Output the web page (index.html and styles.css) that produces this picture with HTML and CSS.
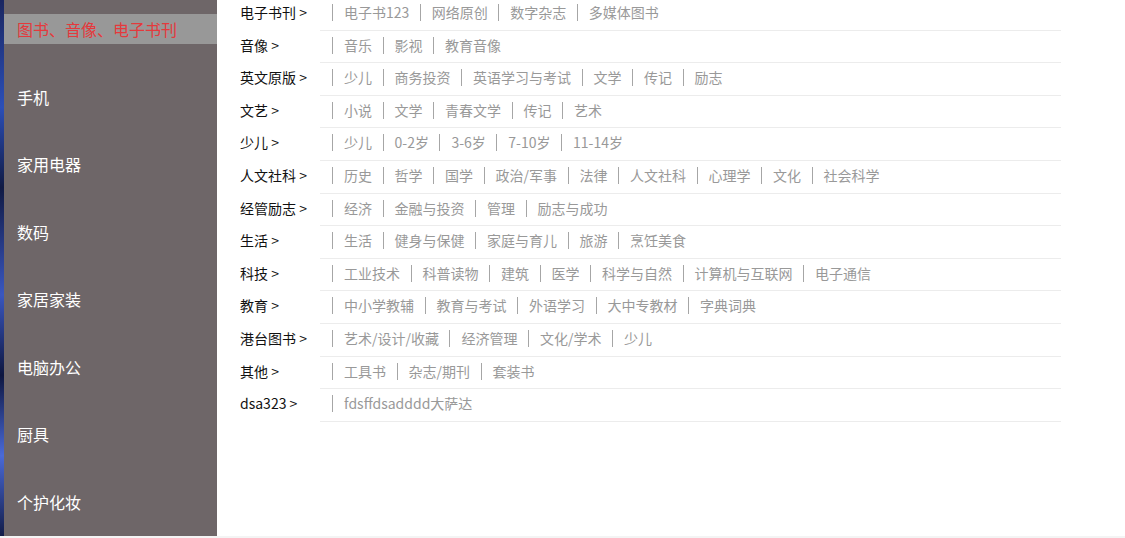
FILE: index.html
```html
<!doctype html>
<html lang="zh-CN">
<head>
    <meta charset="UTF-8">
    <title>商品分类</title>
    <link rel="stylesheet" href="styles.css">
</head>
    <body>
        <div class="page">
            <div class="bgStrip"></div>
            <ul class="catNav">
                <li class="catItem active"><a href="#">图书、音像、电子书刊</a></li>
                <li class="catItem"><a href="#">手机</a></li>
                <li class="catItem"><a href="#">家用电器</a></li>
                <li class="catItem"><a href="#">数码</a></li>
                <li class="catItem"><a href="#">家居家装</a></li>
                <li class="catItem"><a href="#">电脑办公</a></li>
                <li class="catItem"><a href="#">厨具</a></li>
                <li class="catItem"><a href="#">个护化妆</a></li>
            </ul>
            <div class="catPanel">
                <dl class="subList">
                    <dt>电子书刊 &gt;</dt>
                    <dd><a href="#">电子书123</a><a href="#">网络原创</a><a href="#">数字杂志</a><a href="#">多媒体图书</a></dd>
                    <dt>音像 &gt;</dt>
                    <dd><a href="#">音乐</a><a href="#">影视</a><a href="#">教育音像</a></dd>
                    <dt>英文原版 &gt;</dt>
                    <dd><a href="#">少儿</a><a href="#">商务投资</a><a href="#">英语学习与考试</a><a href="#">文学</a><a href="#">传记</a><a href="#">励志</a></dd>
                    <dt>文艺 &gt;</dt>
                    <dd><a href="#">小说</a><a href="#">文学</a><a href="#">青春文学</a><a href="#">传记</a><a href="#">艺术</a></dd>
                    <dt>少儿 &gt;</dt>
                    <dd><a href="#">少儿</a><a href="#">0-2岁</a><a href="#">3-6岁</a><a href="#">7-10岁</a><a href="#">11-14岁</a></dd>
                    <dt>人文社科 &gt;</dt>
                    <dd><a href="#">历史</a><a href="#">哲学</a><a href="#">国学</a><a href="#">政治/军事</a><a href="#">法律</a><a href="#">人文社科</a><a href="#">心理学</a><a href="#">文化</a><a href="#">社会科学</a></dd>
                    <dt>经管励志 &gt;</dt>
                    <dd><a href="#">经济</a><a href="#">金融与投资</a><a href="#">管理</a><a href="#">励志与成功</a></dd>
                    <dt>生活 &gt;</dt>
                    <dd><a href="#">生活</a><a href="#">健身与保健</a><a href="#">家庭与育儿</a><a href="#">旅游</a><a href="#">烹饪美食</a></dd>
                    <dt>科技 &gt;</dt>
                    <dd><a href="#">工业技术</a><a href="#">科普读物</a><a href="#">建筑</a><a href="#">医学</a><a href="#">科学与自然</a><a href="#">计算机与互联网</a><a href="#">电子通信</a></dd>
                    <dt>教育 &gt;</dt>
                    <dd><a href="#">中小学教辅</a><a href="#">教育与考试</a><a href="#">外语学习</a><a href="#">大中专教材</a><a href="#">字典词典</a></dd>
                    <dt>港台图书 &gt;</dt>
                    <dd><a href="#">艺术/设计/收藏</a><a href="#">经济管理</a><a href="#">文化/学术</a><a href="#">少儿</a></dd>
                    <dt>其他 &gt;</dt>
                    <dd><a href="#">工具书</a><a href="#">杂志/期刊</a><a href="#">套装书</a></dd>
                    <dt>dsa323 &gt;</dt>
                    <dd><a href="#">fdsffdsadddd大萨达</a></dd>
                </dl>
            </div>
        </div>
    </body>
</html>
```

FILE: styles.css
```css
body {
    margin: 0;
    background-color: #f4f4f4;
    font-family: "Noto Sans CJK SC", "Microsoft YaHei", sans-serif;
    font-size: 14px;
}

a {
    text-decoration: none;
}

.page {
    display: flex;
    height: 536px;
    overflow: hidden;
    background-color: #ffffff;
}

.bgStrip {
    width: 4px;
    flex-shrink: 0;
    background: linear-gradient(180deg, #1a2660 0%, #2b4fb8 20%, #101a44 35%, #3a57c0 55%, #0d1640 70%, #4a6ad8 85%, #121c48 100%);
}

.catNav {
    list-style: none;
    margin: 0;
    padding: 0;
    width: 213px;
    flex-shrink: 0;
    background-color: #6e6668;
}

.catItem {
    padding: 14px 0 23.5px;
}

.catItem a {
    display: block;
    line-height: 30px;
    padding-left: 13px;
    font-size: 16px;
    color: #ffffff;
}

.catItem.active a {
    background-color: #989898;
    color: #e4393c;
}

.catPanel {
    flex: 1;
    padding-left: 23px;
}

.subList {
    display: grid;
    grid-template-columns: 80px 741px;
    margin: -2px 0 0;
}

.subList dt {
    padding-top: 6px;
    line-height: 17px;
    color: #111111;
}

.subList dd {
    display: flex;
    flex-wrap: wrap;
    margin: 0;
    padding: 6px 0 8.6px 12px;
    border-bottom: 1px solid #ececec;
}

.subList dd a {
    line-height: 17px;
    padding: 0 10.5px 0 11px;
    border-left: 1px solid #a6a6a6;
    color: #999999;
}
```
